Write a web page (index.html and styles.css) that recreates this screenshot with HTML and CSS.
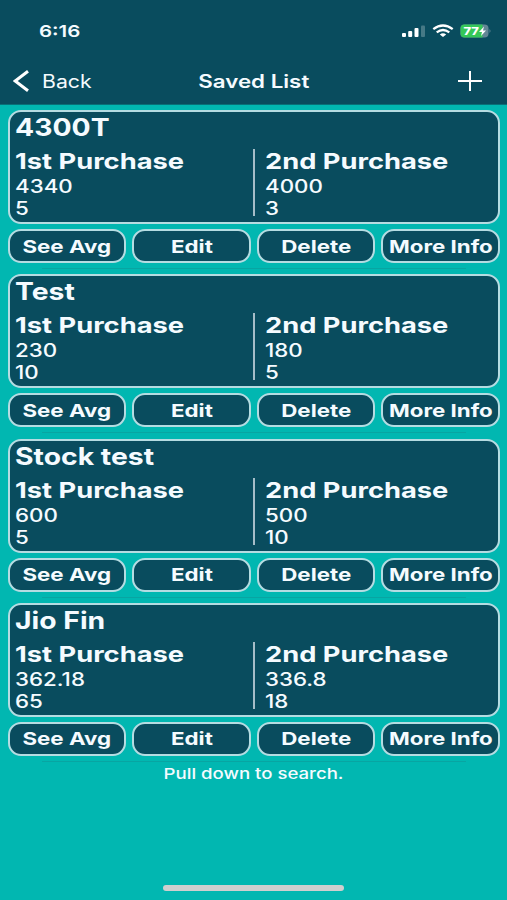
FILE: index.html
```
<!DOCTYPE html>
<html lang="en">
<head>
    <meta charset="UTF-8">
    <meta name="viewport" content="width=device-width, initial-scale=1.0">
    <title>Saved List</title>
    <link rel="stylesheet" href="styles.css">
</head>
<body>
    <header>
        <div class="status-bar">
            <span class="time">6:16</span>
            <svg class="status-icons" width="88" height="18" viewBox="0 0 88 18">
                <g fill="#fff">
                    <rect x="0" y="11" width="4" height="4" rx="1"/>
                    <rect x="6.2" y="9" width="4" height="6" rx="1"/>
                    <rect x="12.5" y="6" width="4" height="9" rx="1"/>
                    <rect x="19" y="3.5" width="4" height="11.5" rx="1" opacity=".25"/>
                </g>
                <g fill="none" stroke="#fff" stroke-width="2.3">
                    <path d="M31.3 7.2Q41-.2 50.7 7.2"/>
                    <path d="M34.7 10.4Q41 5.6 47.3 10.4"/>
                </g>
                <path d="M37.8 12.4Q41 10.1 44.2 12.4L41 15Z" fill="#fff"/>
                <rect x="58.5" y="2.5" width="28" height="13" rx="4" fill="#638695"/>
                <path d="M62.5 2.5H80.5V15.5H62.5Q58.5 15.5 58.5 11.5V6.5Q58.5 2.5 62.5 2.5Z" fill="#35c759"/>
                <path d="M87.5 7Q89.5 9 87.5 11Z" fill="#638695"/>
                <text class="battery" x="61.5" y="13" textLength="15.5" lengthAdjust="spacingAndGlyphs">77</text>
                <path d="M82 4.5L77 10H80L79 14L84 8.5H81Z" fill="#fff"/>
            </svg>
        </div>
        <nav>
            <a class="back">
                <svg width="17" height="22" viewBox="0 0 17 22"><path d="M15 1.2L2.2 11L15 20.8" fill="none" stroke="#fff" stroke-width="3"/></svg>
                <span>Back</span>
            </a>
            <h1><span>Saved List</span></h1>
            <svg class="add" width="24" height="20" viewBox="0 0 24 20"><path d="M0 10H24M12 0V20" stroke="#fff" stroke-width="2"/></svg>
        </nav>
    </header>

    <main>
        <section class="item">
            <div class="card">
                <h2><span>4300T</span></h2>
                <div class="purchases">
                    <div class="purchase"><h3><span>1st Purchase</span></h3><p><span>4340</span></p><p><span>5</span></p></div>
                    <div class="purchase"><h3><span>2nd Purchase</span></h3><p><span>4000</span></p><p><span>3</span></p></div>
                </div>
            </div>
            <div class="actions">
                <button><span>See Avg</span></button>
                <button><span>Edit</span></button>
                <button><span>Delete</span></button>
                <button><span>More Info</span></button>
            </div>
        </section>
        <section class="item">
            <div class="card">
                <h2><span>Test</span></h2>
                <div class="purchases">
                    <div class="purchase"><h3><span>1st Purchase</span></h3><p><span>230</span></p><p><span>10</span></p></div>
                    <div class="purchase"><h3><span>2nd Purchase</span></h3><p><span>180</span></p><p><span>5</span></p></div>
                </div>
            </div>
            <div class="actions">
                <button><span>See Avg</span></button>
                <button><span>Edit</span></button>
                <button><span>Delete</span></button>
                <button><span>More Info</span></button>
            </div>
        </section>
        <section class="item">
            <div class="card">
                <h2><span>Stock test</span></h2>
                <div class="purchases">
                    <div class="purchase"><h3><span>1st Purchase</span></h3><p><span>600</span></p><p><span>5</span></p></div>
                    <div class="purchase"><h3><span>2nd Purchase</span></h3><p><span>500</span></p><p><span>10</span></p></div>
                </div>
            </div>
            <div class="actions">
                <button><span>See Avg</span></button>
                <button><span>Edit</span></button>
                <button><span>Delete</span></button>
                <button><span>More Info</span></button>
            </div>
        </section>
        <section class="item">
            <div class="card">
                <h2><span>Jio Fin</span></h2>
                <div class="purchases">
                    <div class="purchase"><h3><span>1st Purchase</span></h3><p><span>362.18</span></p><p><span>65</span></p></div>
                    <div class="purchase"><h3><span>2nd Purchase</span></h3><p><span>336.8</span></p><p><span>18</span></p></div>
                </div>
            </div>
            <div class="actions">
                <button><span>See Avg</span></button>
                <button><span>Edit</span></button>
                <button><span>Delete</span></button>
                <button><span>More Info</span></button>
            </div>
        </section>
        <p class="hint"><span>Pull down to search.</span></p>
    </main>

    <div class="home-indicator"></div>
</body>
</html>
```

FILE: styles.css
```
* {
    box-sizing: border-box;
}

body {
    margin: 0;
    height: 900px;
    display: flex;
    flex-direction: column;
    overflow: hidden;
    font-family: Inter, "Liberation Sans", sans-serif;
    background-color: #01b7b1;
    color: #f5fbff;
}

h1, h2, h3, p {
    margin: 0;
    white-space: nowrap;
}

/* wide lettering */
span {
    display: inline-block;
    transform: scaleX(1.24);
    transform-origin: left center;
}

h2 span, .back span {
    transform: scaleX(1.18);
}

header {
    height: 105px;
    background-color: #094c5e;
    border-bottom: 1px solid #087078;
}

.status-bar {
    height: 56px;
    padding: 6px 17px 0 39px;
    display: flex;
    justify-content: space-between;
    align-items: center;
}

.time {
    font-size: 16.5px;
    font-weight: 600;
}

.status-icons {
    overflow: visible;
}

.battery {
    font-size: 11px;
    font-weight: 800;
    fill: #fff;
}

nav {
    height: 49px;
    padding: 0 25px 0 13px;
    display: grid;
    grid-template-columns: 1fr auto 1fr;
    align-items: center;
}

.back {
    display: flex;
    align-items: center;
    gap: 12px;
    padding-top: 1px;
    font-size: 18px;
}

h1 {
    padding: 1px 0 0 12px;
    font-size: 18px;
    font-weight: 600;
}

h1 span, button span, .hint span {
    transform-origin: center;
}

.add {
    justify-self: end;
}

main {
    flex: 1;
    padding: 5px 7px 0 7.5px;
}

.item {
    height: 164.3px;
}

.item::after {
    content: "";
    display: block;
    height: 1px;
    margin: 5px 34px 0;
    background-color: #08a5a2;
}

.card {
    height: 114px;
    padding: 0 5px;
    border: 2px solid #b5dce2;
    border-radius: 13px;
    background-color: #094c5e;
}

h2 {
    font-size: 24px;
    font-weight: 700;
    line-height: 32px;
}

.purchases {
    display: grid;
    grid-template-columns: 240px 1fr;
    margin-top: 5px;
}

.purchase {
    height: 67px;
}

.purchase:first-child {
    border-right: 2px solid #a5bdc8;
}

.purchase:last-child {
    padding-left: 10px;
}

h3 {
    margin-bottom: 3px;
    font-size: 22px;
    font-weight: 700;
    line-height: 24px;
}

.purchase p {
    font-size: 18px;
    font-weight: 500;
    line-height: 22px;
}

.actions {
    display: grid;
    grid-template-columns: repeat(4, 1fr);
    gap: 6px;
    margin-top: 5px;
}

button {
    height: 34px;
    padding: 0;
    border: 2px solid #b5dce2;
    border-radius: 13px;
    background-color: #094c5e;
    color: #f5fbff;
    font-family: inherit;
    font-size: 18px;
    font-weight: 700;
    white-space: nowrap;
}

.hint {
    margin-top: -3px;
    text-align: center;
    font-size: 15px;
    font-weight: 500;
    line-height: 20px;
}

.home-indicator {
    width: 181px;
    height: 6px;
    margin: 0 auto 9px;
    border-radius: 3px;
    background-color: #cfcfcf;
}
```
